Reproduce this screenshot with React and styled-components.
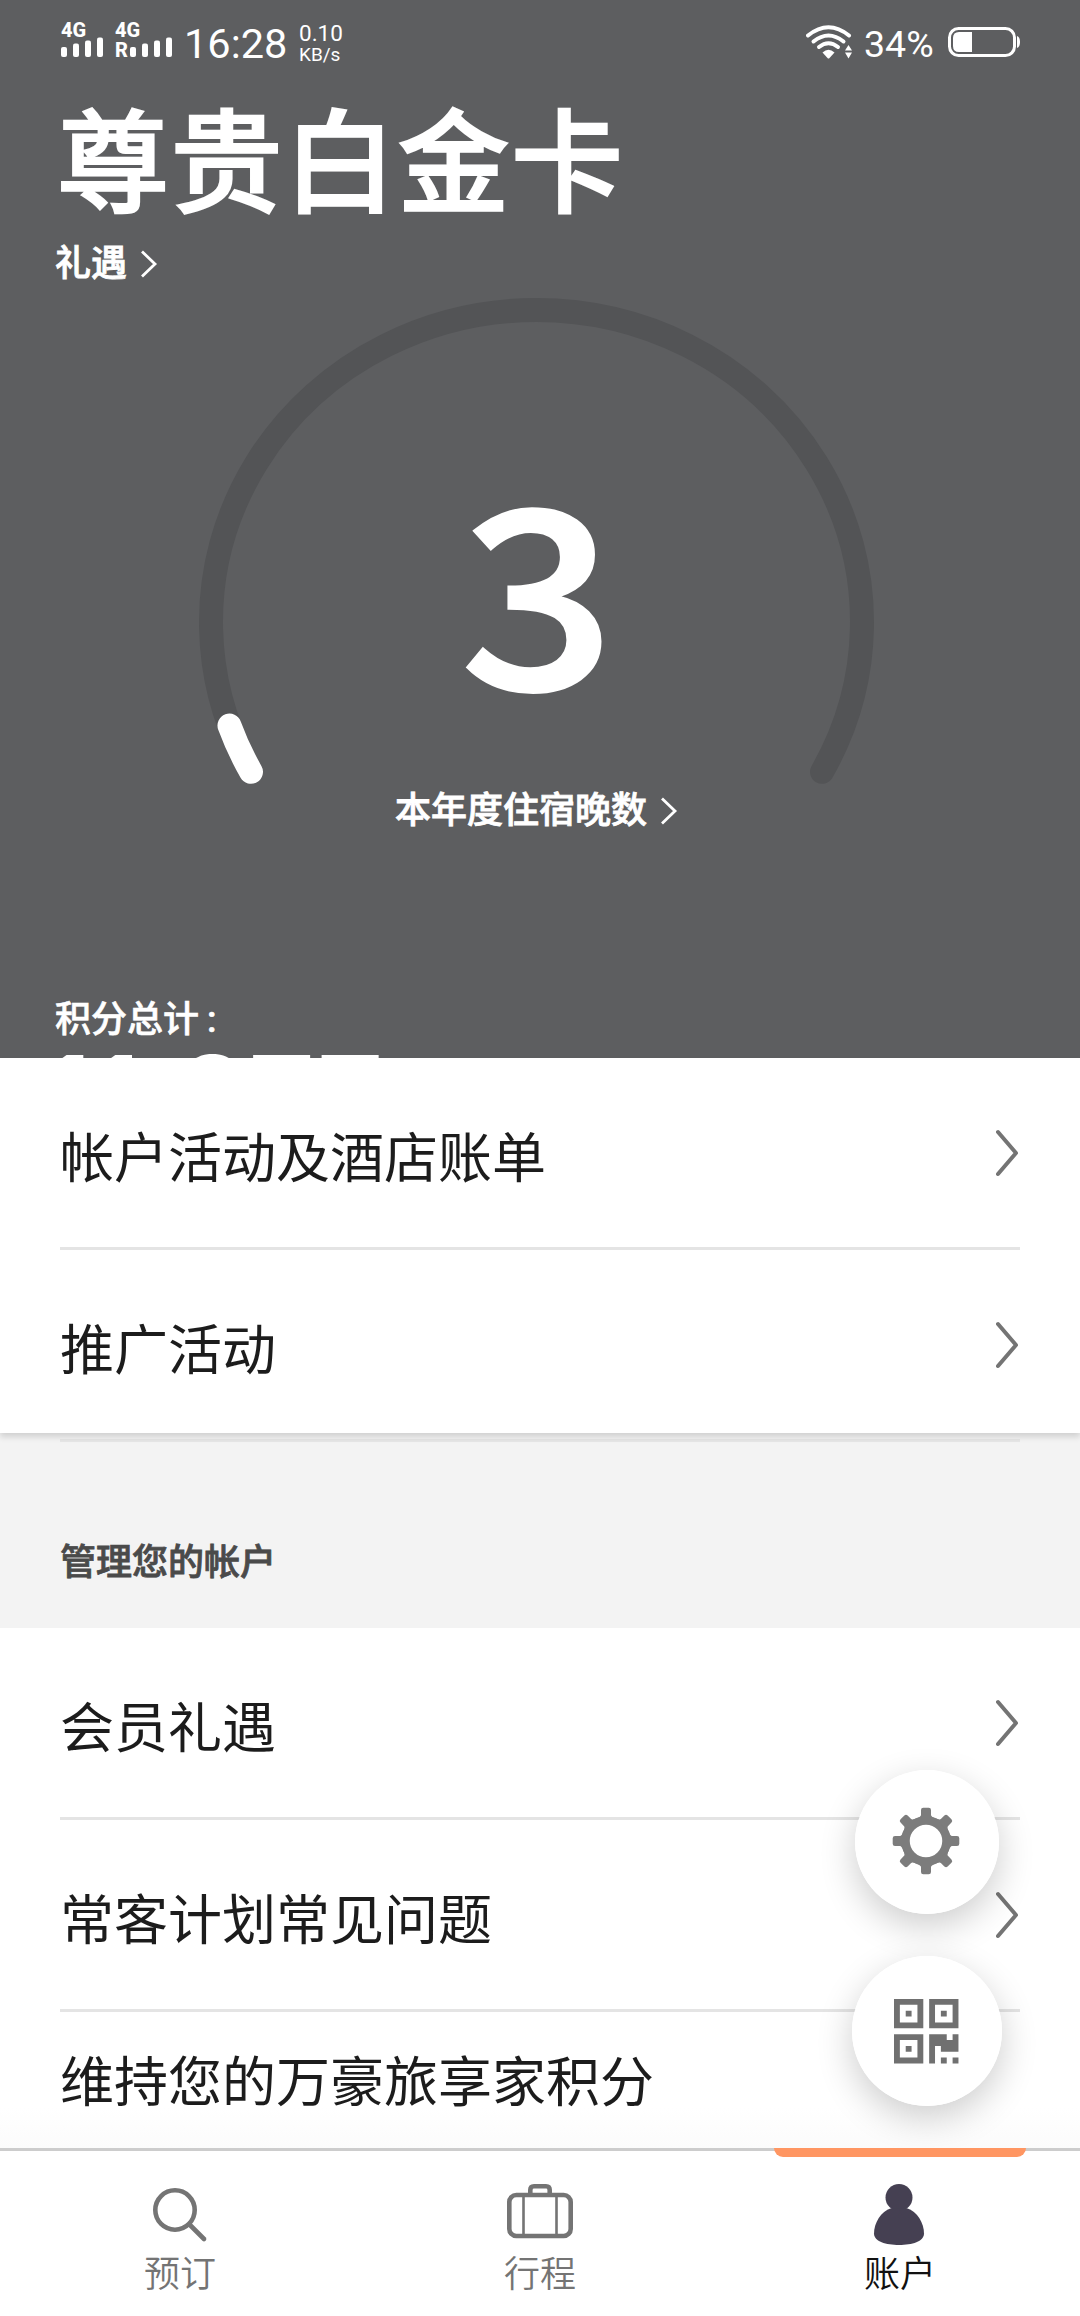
import React from 'react'
import styled, { createGlobalStyle } from 'styled-components'

const GlobalStyle = createGlobalStyle`
  * {
    box-sizing: border-box;
  }
  body {
    margin: 0;
    color: #1c1c1c;
    background: #fff;
    font-family: Roboto, "Noto Sans CJK SC", sans-serif;
  }
  svg {
    display: block;
  }
`

const ACTIVITY = ['帐户活动及酒店账单', '推广活动']
const MANAGE = ['会员礼遇', '常客计划常见问题']

// nights progress is drawn on a slightly flattened ring
const RING = { cx: 340.5, cy: 324, rx: 325.5, ry: 312 }

const ringPoint = deg => {
  const rad = (deg * Math.PI) / 180
  return `${RING.cx + RING.rx * Math.cos(rad)} ${RING.cy + RING.ry * Math.sin(rad)}`
}

const ringPath = (from, to, large) =>
  `M${ringPoint(from)} A${RING.rx} ${RING.ry} 0 ${large} 1 ${ringPoint(to)}`

const SignalBars = () => (
  <svg width="43" height="20" viewBox="0 0 43 20" fill="#fff">
    <rect x="0" y="10" width="6" height="10" rx="2" />
    <rect x="12" y="6.500" width="6" height="13.500" rx="2" />
    <rect x="24" y="3.500" width="6" height="16.500" rx="2" />
    <rect x="36" y="0.500" width="6" height="19.500" rx="2" />
  </svg>
)

const WifiIcon = () => (
  <svg width="48" height="35" viewBox="0 0 48 35" fill="none" stroke="#fff" strokeWidth="4" strokeLinecap="round">
    <path d="M2 10.500 Q22.500 -6 43 10.500" />
    <path d="M7.500 16.500 Q22.500 4.500 37.500 16.500" />
    <path d="M13 22 Q22.500 14.500 32 22" />
    <path d="M16.500 27.500 Q22.500 22 28.500 27.500 L23.500 33 Q22.500 34 21.500 33 Z" fill="#fff" stroke="none" />
    <path d="M39 25.500 L42.500 20 L46 25.500 Z M39 27.500 L42.500 33.500 L46 27.500 Z" fill="#fff" stroke="none" />
  </svg>
)

const BatteryIcon = () => (
  <svg width="72" height="30" viewBox="0 0 72 30">
    <rect x="1.500" y="1.500" width="65" height="27" rx="9" fill="none" stroke="#fff" strokeWidth="3" />
    <path d="M11 5 H24 V25 H11 Q5 25 5 19 V11 Q5 5 11 5 Z" fill="#fff" />
    <path d="M69 9 Q72 10 72 15 Q72 20 69 21 Z" fill="#fff" />
  </svg>
)

const SmallChevron = () => (
  <svg width="18" height="30" viewBox="0 0 18 30" fill="none" stroke="#fff" strokeWidth="2.800">
    <path d="M2 2.500 L15 15 L2 27.500" />
  </svg>
)

const RowChevron = () => (
  <svg width="24" height="48" viewBox="0 0 24 48" fill="none" stroke="#747474" strokeWidth="4" strokeLinecap="round" strokeLinejoin="round">
    <path d="M2 3 L20 24 L2 45" />
  </svg>
)

const TEETH = [0, 45, 90, 135, 180, 225, 270, 315]

const GearIcon = () => (
  <svg width="71" height="71" viewBox="-34 -34 71 71" fill="#7c7c7c">
    <circle r="20.500" fill="none" stroke="#7c7c7c" strokeWidth="8.500" />
    {TEETH.map(deg => (
      <path
        key={deg}
        transform={`rotate(${deg})`}
        d="M-9.500 -22.500 Q-5 -24.500 -5 -26 V-31 Q-5 -33.300 -2.700 -33.300 H2.700 Q5 -33.300 5 -31 V-26 Q5 -24.500 9.500 -22.500 Z"
      />
    ))}
  </svg>
)

const QrIcon = () => (
  <svg width="66" height="65" viewBox="0 0 66 65" fill="#707070" fillRule="evenodd">
    <g transform="scale(5.860)">
      <path d="M0 0h5v5h-5z M1 1v3h3v-3z M2 2h1v1h-1z" />
      <path d="M6 0h5v5h-5z M7 1v3h3v-3z M8 2h1v1h-1z" />
      <path d="M0 6h5v5h-5z M1 7v3h3v-3z M2 8h1v1h-1z" />
      <path d="M6 6h3v1h1v-1h1v3h-3v-1h-1v3h-1z M8 10h1v1h-1z M10 10h1v1h-1z" />
    </g>
  </svg>
)

const SearchIcon = () => (
  <svg width="72" height="66" viewBox="0 0 72 66" fill="none" stroke="#747474" strokeWidth="4.600">
    <circle cx="31" cy="30" r="19.700" />
    <path d="M45.500 44.500 L60 59" strokeLinecap="round" />
  </svg>
)

const SuitcaseIcon = () => (
  <svg width="72" height="66" viewBox="0 0 72 66" fill="none" stroke="#747474" strokeWidth="4.600">
    <rect x="5.300" y="15" width="61.400" height="41" rx="7" />
    <path d="M26.300 15 V10 Q26.300 6.300 30 6.300 H42 Q45.700 6.300 45.700 10 V15" />
    <path d="M19.500 15 V56 M52.500 15 V56" strokeWidth="2.600" />
  </svg>
)

const PersonIcon = () => (
  <svg width="72" height="66" viewBox="0 0 72 66" fill="#454052">
    <circle cx="35" cy="17.500" r="13.500" />
    <path d="M27 28.300 H43 C53 31.500 60 43 60 53.500 C60 61.500 48 65 35 65 C22 65 10 61.500 10 53.500 C10 43 17 31.500 27 28.300 Z" />
  </svg>
)

const MenuRow = ({ label }) => (
  <Row>
    <span>{label}</span>
    <RowChevron />
  </Row>
)

export default function App() {
  return (
    <Screen>
      <GlobalStyle />
      <Hero>
        <StatusBar>
          <Sim>
            <Network>4G</Network>
            <SignalBars />
          </Sim>
          <Sim>
            <Network>4G</Network>
            <Roaming>
              <Network>R</Network>
              <SignalBars />
            </Roaming>
          </Sim>
          <Clock>16:28</Clock>
          <Speed>
            <SpeedValue>0.10</SpeedValue>
            <span>KB/s</span>
          </Speed>
          <StatusRight>
            <WifiIcon />
            <Percent>34%</Percent>
            <BatteryIcon />
          </StatusRight>
        </StatusBar>
        <Level>尊贵白金卡</Level>
        <HeroLink>
          礼遇
          <SmallChevron />
        </HeroLink>
        <Nights>
          <svg width="680" height="500" viewBox="0 0 680 500" fill="none" strokeWidth="24" strokeLinecap="round">
            <path d={ringPath(151.3, 388.7, 1)} stroke="#535456" />
            <path d={ringPath(151.3, 160.6, 0)} stroke="#fff" />
          </svg>
          <NightCount>3</NightCount>
        </Nights>
        <NightsLink>
          本年度住宿晚数
          <SmallChevron />
        </NightsLink>
        <PointsLabel>积分总计 :</PointsLabel>
        <Points>11,277</Points>
      </Hero>
      <ActivityList>
        {ACTIVITY.map(label => <MenuRow key={label} label={label} />)}
      </ActivityList>
      <SectionTitle>管理您的帐户</SectionTitle>
      <ManageList>
        {MANAGE.map(label => <MenuRow key={label} label={label} />)}
        <LastRow>维持您的万豪旅享家积分</LastRow>
        <Floating>
          <RoundButton $size={144}>
            <GearIcon />
          </RoundButton>
          <RoundButton $size={150}>
            <QrIcon />
          </RoundButton>
        </Floating>
      </ManageList>
      <TabBar>
        <Tab>
          <SearchIcon />
          预订
        </Tab>
        <Tab>
          <SuitcaseIcon />
          行程
        </Tab>
        <Tab $active>
          <PersonIcon />
          账户
        </Tab>
      </TabBar>
    </Screen>
  )
}

const Screen = styled.div`
  width: 1080px;
  height: 2316px;
  display: flex;
  overflow: hidden;
  flex-direction: column;
`

const Hero = styled.header`
  height: 1058px;
  flex: none;
  display: flex;
  color: #fff;
  overflow: hidden;
  background: #5d5e60;
  flex-direction: column;
`

const StatusBar = styled.div`
  height: 84px;
  flex: none;
  display: flex;
  padding: 0 60px;
  align-items: flex-start;
`

const Sim = styled.div`
  width: 54px;
  padding: 20px 0 0 1px;
`

const Network = styled.div`
  height: 17px;
  font-size: 20px;
  font-weight: 800;
  line-height: 20px;
`

const Roaming = styled.div`
  display: flex;
  height: 20px;
  gap: 2px;
  & > ${Network} {
    padding-top: 3px;
    flex: none;
  }
  svg {
    flex: none;
  }
`

const Clock = styled.div`
  margin-left: 16px;
  width: 115px;
  font-size: 41.5px;
  line-height: 48px;
  padding-top: 20px;
  white-space: nowrap;
`

const Speed = styled.div`
  display: flex;
  padding-top: 23px;
  font-size: 19px;
  line-height: 21px;
  flex-direction: column;
`

const SpeedValue = styled.span`
  font-size: 22.5px;
`

const StatusRight = styled.div`
  display: flex;
  margin-left: auto;
  padding-top: 25px;
  svg {
    flex: none;
  }
  svg:last-child {
    margin-top: 2px;
  }
`

const Percent = styled.div`
  width: 84px;
  margin-left: 10px;
  font-size: 37.5px;
  line-height: 38px;
`

const Level = styled.h1`
  height: 146px;
  flex: none;
  margin: 0;
  padding-left: 57px;
  font-size: 112px;
  font-weight: 500;
  line-height: 164px;
  letter-spacing: 1.5px;
  -webkit-text-stroke: 2px #fff;
`

const HeroLink = styled.div`
  height: 68px;
  flex: none;
  display: flex;
  gap: 13px;
  padding-left: 55px;
  font-size: 36px;
  font-weight: 500;
  line-height: 64px;
  align-items: center;
  -webkit-text-stroke: 0.8px #fff;
`

const Nights = styled.div`
  width: 680px;
  height: 489px;
  flex: none;
  display: grid;
  margin-left: 196px;
  & > * {
    grid-area: 1 / 1;
  }
`

const NightCount = styled.div`
  padding-left: 3px;
  font-family: "Noto Sans CJK SC", sans-serif;
  font-size: 247px;
  font-weight: 500;
  line-height: 567px;
  text-align: center;
  transform: scaleX(1.1);
  -webkit-text-stroke: 3px #fff;
`

const NightsLink = styled(HeroLink)`
  height: 48px;
  padding-left: 395px;
`

const PointsLabel = styled.div`
  height: 50px;
  flex: none;
  margin-top: 161px;
  padding-left: 55px;
  font-size: 36px;
  font-weight: 500;
  line-height: 48px;
  word-spacing: -1px;
  -webkit-text-stroke: 0.6px #fff;
`

const Points = styled.div`
  flex: none;
  padding-left: 43px;
  font-family: Inter, sans-serif;
  font-size: 115px;
  font-weight: 600;
  line-height: 104px;
`

const ActivityList = styled.section`
  height: 375px;
  flex: none;
  z-index: 1;
  padding: 0 60px;
  background: #fff;
  box-shadow: 0 4px 6px rgba(0, 0, 0, 0.14);
`

const ManageList = styled.section`
  height: 520px;
  flex: none;
  padding: 0 60px;
  position: relative;
  background: linear-gradient(#fff 480px, #fbfbfb);
`

const Row = styled.div`
  height: 192px;
  display: flex;
  font-size: 54px;
  align-items: center;
  border-bottom: 3px solid #e4e4e4;
  justify-content: space-between;
  ${ActivityList} &:last-child {
    height: 190px;
    border-bottom: 0;
  }
  span {
    padding-top: 3px;
  }
`

const LastRow = styled.div`
  font-size: 54px;
  line-height: 80px;
  padding-top: 32px;
`

const SectionTitle = styled.h2`
  height: 195px;
  flex: none;
  margin: 0;
  color: #4a4a4a;
  padding: 6px 60px 0;
  background: #f3f3f3;
  font-size: 36px;
  font-weight: 500;
  line-height: 52px;
  -webkit-text-stroke: 0.8px #4a4a4a;
  &::before {
    content: '';
    height: 3px;
    display: block;
    margin-bottom: 95px;
    background: #e6e6e6;
  }
`

// settings and member code buttons float over the list
const Floating = styled.div`
  top: 142px;
  right: 78px;
  display: flex;
  gap: 42px;
  position: absolute;
  align-items: center;
  flex-direction: column;
`

const RoundButton = styled.button`
  width: ${props => props.$size}px;
  height: ${props => props.$size}px;
  display: flex;
  border: 0;
  padding: 0;
  background: rgba(255, 255, 255, 0.98);
  border-radius: 50%;
  align-items: center;
  justify-content: center;
  box-shadow: 0 12px 36px rgba(0, 0, 0, 0.2);
`

const TabBar = styled.nav`
  height: 168px;
  flex: none;
  z-index: 1;
  display: flex;
  background: #fff;
  border-top: 3px solid #ccc;
`

const Tab = styled.a`
  flex: 1;
  display: flex;
  color: ${props => props.$active ? '#111' : '#747474'};
  font-size: 36px;
  font-weight: 350;
  line-height: 59px;
  position: relative;
  padding-top: 29px;
  align-items: center;
  flex-direction: column;
  &::before {
    content: '';
    top: -3px;
    left: 54px;
    width: 252px;
    height: 9px;
    display: ${props => props.$active ? 'block' : 'none'};
    position: absolute;
    background: #ff9662;
    border-radius: 0 0 9px 9px;
  }
`
